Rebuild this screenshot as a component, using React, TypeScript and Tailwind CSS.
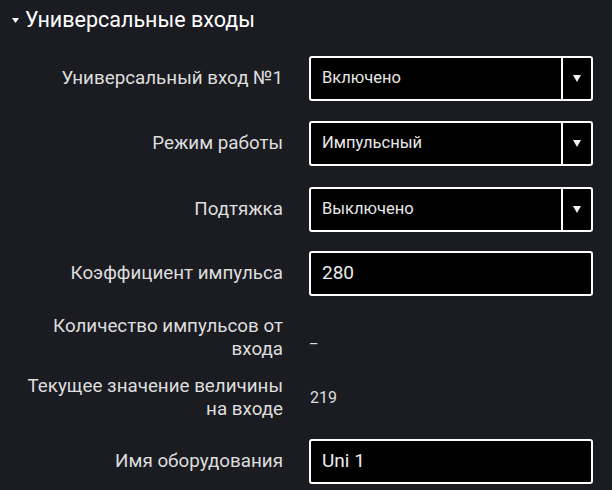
import React from 'react';

type Row =
  | { kind: 'select'; label: string; value: string; mt: string }
  | { kind: 'input'; label: string; value: string; mt: string }
  | { kind: 'text'; label: string; value: string; mt: string };

const rows: Row[] = [
  { kind: 'select', label: 'Универсальный вход №1', value: 'Включено', mt: 'mt-0' },
  { kind: 'select', label: 'Режим работы', value: 'Импульсный', mt: 'mt-[20px]' },
  { kind: 'select', label: 'Подтяжка', value: 'Выключено', mt: 'mt-[21px]' },
  { kind: 'input', label: 'Коэффициент импульса', value: '280', mt: 'mt-[19px]' },
  { kind: 'text', label: 'Количество импульсов от входа', value: '_', mt: 'mt-[19px]' },
  { kind: 'text', label: 'Текущее значение величины на входе', value: '219', mt: 'mt-[15px]' },
  { kind: 'input', label: 'Имя оборудования', value: 'Uni 1', mt: 'mt-[19px]' },
];

function SelectBox({ value }: { value: string }) {
  return (
    <div className="flex h-[45px] w-[284px] items-stretch rounded-[3px] border-2 border-white bg-black">
      <div className="flex flex-1 items-center pl-[11px] text-[16.5px] text-[#e8e8e8]">{value}</div>
      <div className="w-[2px] bg-white" />
      <div className="flex w-[28px] items-center justify-center">
        <svg width="8" height="7" viewBox="0 0 8 7">
          <path d="M0 0h8L4 7z" fill="#f2f2f2" />
        </svg>
      </div>
    </div>
  );
}

function InputBox({ value }: { value: string }) {
  return (
    <div className="flex h-[45px] w-[284px] items-center rounded-[3px] border-2 border-white bg-black pl-[11px] text-[19px] text-[#ececec]">
      {value}
    </div>
  );
}

export default function App() {
  return (
    <div
      className="h-[490px] w-[612px] overflow-hidden bg-[#1b1c21] text-[#dedede]"
      style={{ fontFamily: 'Roboto, "Noto Sans", sans-serif' }}
    >
      <div className="flex h-[40px] items-center pl-[12px]">
        <svg width="7" height="5" viewBox="0 0 7 5" className="mr-[6px]">
          <path d="M0 0h7L3.5 5z" fill="#ffffff" />
        </svg>
        <span className="text-[21.5px] text-white">Универсальные входы</span>
      </div>
      <div className="mt-[16px] flex flex-col pl-[19px]">
        {rows.map((r) => (
          <div key={r.label} className={`flex items-center gap-[26px] ${r.mt}`}>
            <div className="w-[264px] text-right text-[18.8px] leading-[22.5px]">{r.label}</div>
            {r.kind === 'select' && <SelectBox value={r.value} />}
            {r.kind === 'input' && <InputBox value={r.value} />}
            {r.kind === 'text' && (
              <div className="flex h-[45px] items-center pl-[1px] text-[16px]">{r.value}</div>
            )}
          </div>
        ))}
      </div>
    </div>
  );
}
